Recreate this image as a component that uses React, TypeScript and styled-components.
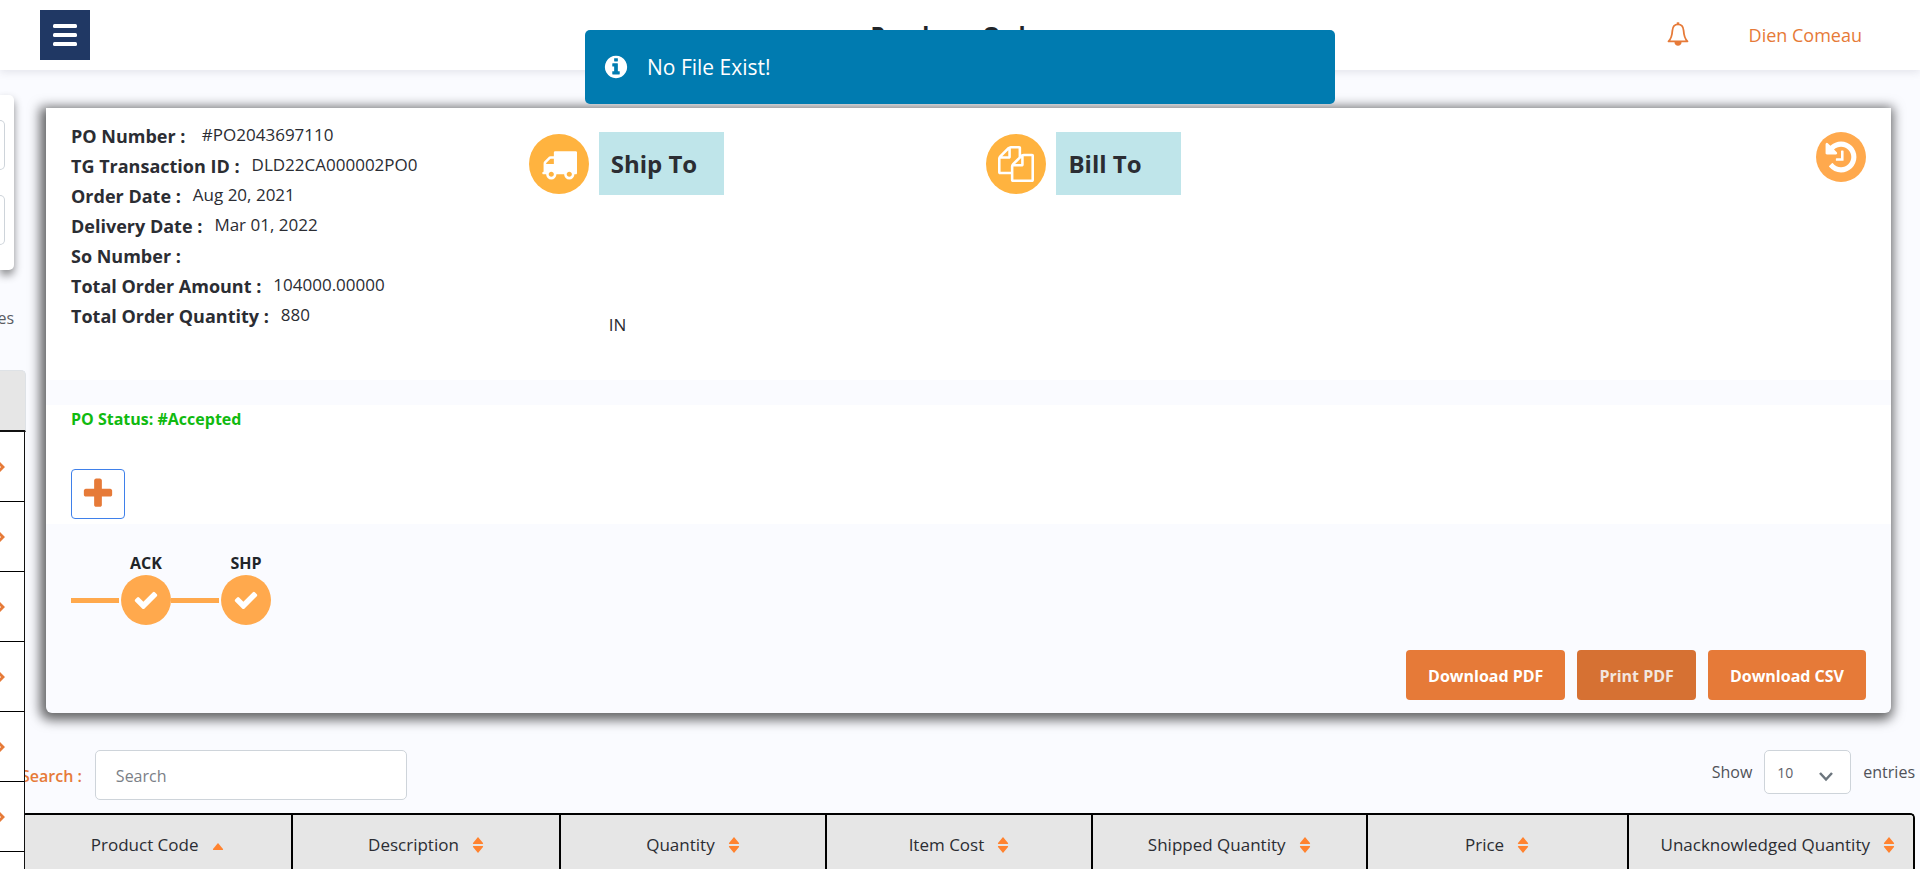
import React from "react";
import styled, { createGlobalStyle } from "styled-components";

const Global = createGlobalStyle`
  *, *::before, *::after { box-sizing: border-box; }
  html, body { margin: 0; }
  body {
    background: #fafbff;
    color: #2b2d33;
    font-family: "Segoe UI", "Open Sans", "Noto Sans", sans-serif;
    font-size: 16px;
    line-height: 24px;
  }
  button, input, select { font: inherit; color: inherit; }
`;

const Shell = styled.div`
  height: 100vh;
  overflow: hidden;
  display: flex;
  flex-direction: column;
`;

const TopBar = styled.header`
  position: relative;
  z-index: 3;
  flex: none;
  height: 70px;
  padding: 0 40px;
  display: grid;
  grid-template-columns: 1fr auto 1fr;
  align-items: center;
  background: #fff;
  box-shadow: 0 2px 8px rgba(60, 60, 80, 0.12);
`;

const MenuButton = styled.button`
  width: 50px;
  height: 50px;
  padding: 0;
  border: 0;
  background: #203864;
  color: #fff;
  display: flex;
  align-items: center;
  justify-content: center;
`;

const PageTitle = styled.h1`
  margin: 0;
  font-size: 23px;
  line-height: 30px;
  font-weight: 700;
  color: #212529;
`;

const UserArea = styled.div`
  display: flex;
  align-items: center;
  justify-content: flex-end;
  gap: 60px;
  padding-right: 18px;
`;

const BellButton = styled.button`
  display: flex;
  padding: 0 0 2px;
  border: 0;
  background: none;
  color: #e67a38;
`;

const UserLink = styled.a`
  color: #e67a38;
  font-size: 18px;
  text-decoration: none;
`;

const Toast = styled.div`
  position: fixed;
  z-index: 10;
  top: 30px;
  left: 50%;
  transform: translateX(-50%);
  width: 750px;
  height: 74px;
  padding: 0 18px;
  display: flex;
  align-items: center;
  gap: 18px;
  border-radius: 5px;
  background: #007bb0;
  color: #fff;
  font-size: 21px;
`;

const Body = styled.div`
  flex: 1;
  display: flex;
  min-height: 0;
`;

const Backdrop = styled.aside`
  position: relative;
  z-index: 2;
  flex: none;
  width: 26px;
  padding-top: 25px;
`;

const FilterCard = styled.div`
  width: 14px;
  padding: 25px 9px 25px 0;
  display: flex;
  flex-direction: column;
  gap: 25px;
  background: #fff;
  border-radius: 0 5px 5px 0;
  box-shadow: 0 5px 8px rgba(0, 0, 0, 0.45);
`;

const FilterField = styled.div`
  height: 50px;
  background: #fff;
  border: 1px solid #ced4da;
  border-left: 0;
  border-radius: 0 5px 5px 0;
`;

const Clipped = styled.div`
  width: 14px;
  margin: 36px 0 40px;
  display: flex;
  justify-content: flex-end;
  color: #5a5c63;
`;

const RowHead = styled.div`
  height: 62px;
  background: #e6e6e6;
  border: 1px solid #dee2e6;
  border-left: 0;
  border-bottom: 2px solid #111;
  border-radius: 0 5px 0 0;
`;

const Row = styled.div`
  height: 70px;
  display: flex;
  align-items: center;
  background: #fff;
  color: #e67a38;
  border-right: 1px solid #111;
  border-bottom: 1px solid #000;
  width: 25px;
`;

const Main = styled.main`
  flex: 1;
  min-width: 0;
  padding: 38px 5px 0 0;
`;

const Card = styled.section`
  margin: 0 24px 0 20px;
  padding-bottom: 13px;
  border-radius: 0 0 6px 6px;
  background: #fafbff;
  box-shadow: -2px 3px 12px 4px rgba(0, 0, 0, 0.6);
`;

const Summary = styled.div`
  min-height: 272px;
  padding: 13px 25px;
  display: grid;
  grid-template-columns: 25.5% 25.5% 1fr auto;
  background: #fff;
`;

const Facts = styled.dl`
  margin: 0;
`;

const Fact = styled.div`
  display: flex;
  gap: 12px;
  height: 30px;
  line-height: 30px;
  dt { font-size: 18px; font-weight: 700; }
  dd { margin: 0; line-height: 28px; font-size: 17px; }
`;

const Party = styled.div`
  padding-top: 11px;
`;

const PartyHead = styled.div`
  display: flex;
  align-items: center;
  gap: 10px;
`;

const Disc = styled.span<{ $size: number; $color?: string }>`
  flex: none;
  width: ${(p) => p.$size}px;
  height: ${(p) => p.$size}px;
  border-radius: 50%;
  background: ${(p) => p.$color ?? "#ffa94d"};
  color: #fff;
  display: flex;
  align-items: center;
  justify-content: center;
`;

const PartyTitle = styled.h2`
  margin: 0;
  width: 125px;
  padding: 0 12px;
  background: #bfe5ea;
  font-size: 24px;
  line-height: 63px;
  font-weight: 700;
`;

const Address = styled.p`
  margin: 118px 0 0 80px;
  font-size: 17px;
`;

const HistoryButton = styled.button`
  margin-top: 11px;
  padding: 0;
  border: 0;
  background: none;
  align-self: start;
`;

const Status = styled.div`
  margin-top: 25px;
  padding: 2px 25px 5px;
  background: #fff;
`;

const StatusText = styled.p`
  margin: 0 0 38px;
  color: #10ba10;
  font-weight: 700;
`;

const AddButton = styled.button`
  width: 54px;
  height: 50px;
  padding: 0;
  border: 1px solid #3f80ea;
  border-radius: 4px;
  background: #fff;
  color: #e67a38;
  display: flex;
  align-items: center;
  justify-content: center;
`;

const Steps = styled.ol`
  list-style: none;
  margin: 0;
  padding: 27px 25px 0;
  display: flex;
`;

const Step = styled.li`
  width: 100px;
  display: grid;
  grid-template-columns: 48px 50px;
  column-gap: 2px;
  align-items: center;
  justify-items: center;
`;

const StepName = styled.span`
  grid-column: 2;
  font-weight: 700;
  color: #212529;
`;

const StepLine = styled.span`
  grid-column: 1;
  width: 100%;
  height: 5px;
  background: #ffa94d;
`;

const Actions = styled.div`
  margin-top: 25px;
  padding: 0 25px;
  display: flex;
  justify-content: flex-end;
  gap: 12px;
`;

const ActionButton = styled.button<{ $pressed?: boolean }>`
  height: 50px;
  padding: 2px 22px 0;
  border: 0;
  border-radius: 4px;
  background: ${(p) => (p.$pressed ? "#d67133" : "#e67a38")};
  color: ${(p) => (p.$pressed ? "#f3e6df" : "#fff")};
  font-weight: 700;
`;

const Tools = styled.div`
  margin: 37px 0 13px -5px;
  display: flex;
  justify-content: space-between;
  align-items: flex-start;
`;

const SearchGroup = styled.div`
  display: flex;
  align-items: center;
  gap: 13px;
  label { color: #e67a38; font-weight: 600; padding-top: 2px; }
`;

const SearchInput = styled.input`
  width: 312px;
  height: 50px;
  padding: 2px 20px 0;
  border: 1px solid #ced4da;
  border-radius: 5px;
  background: #fff;
  &::placeholder { color: #7b8087; opacity: 1; }
`;

const LengthLabel = styled.label`
  display: flex;
  align-items: center;
  gap: 12px;
  color: #505259;
`;

const SelectWrap = styled.span`
  position: relative;
  display: flex;
  svg {
    position: absolute;
    right: 17px;
    top: 18px;
    color: #6c757d;
    pointer-events: none;
  }
`;

const LengthSelect = styled.select`
  width: 87px;
  height: 44px;
  padding: 2px 12px 0;
  appearance: none;
  border: 1px solid #ced4da;
  border-radius: 5px;
  background: #fff;
  color: #5f6168;
  font-size: 14px;
`;

const Items = styled.table`
  width: calc(100% + 5px);
  margin-left: -5px;
  table-layout: fixed;
  border-collapse: separate;
  border-spacing: 0;
  border: 2px solid #000;
  border-bottom: 0;
  border-radius: 5px 5px 0 0;
  overflow: hidden;
`;

const HeadCell = styled.th`
  height: 60px;
  padding: 0;
  background: #e6e6e6;
  border-right: 2px solid #000;
  font-size: 17px;
  font-weight: 400;
  &:last-child { border-right: 0; padding-left: 14px; }
`;

const SortButton = styled.button`
  padding: 0;
  border: 0;
  background: none;
  display: inline-flex;
  align-items: center;
  gap: 13px;
  white-space: nowrap;
`;

const ICONS = {
  truck:
    "M640 1408q0-52-38-90t-90-38-90 38-38 90 38 90 90 38 90-38 38-90zm-384-512h384v-256h-158q-13 0-22 9l-195 195q-9 9-9 22v30zm1280 512q0-52-38-90t-90-38-90 38-38 90 38 90 90 38 90-38 38-90zm256-1088v1024q0 15-4 26.5t-13.5 18.5-16.5 11.5-23.5 6-22.5 2-25.5 0-22.5-.5q0 106-75 181t-181 75-181-75-75-181h-384q0 106-75 181t-181 75-181-75-75-181h-64q-3 0-22.5.5t-25.5 0-22.5-2-23.5-6-16.5-11.5-13.5-18.5-4-26.5q0-26 19-45t45-19v-320q0-8-.5-35t0-38 2.5-34.5 6.5-37 14-30.5 22.5-30l198-198q19-19 50.5-32t58.5-13h160v-192q0-26 19-45t45-19h1024q26 0 45 19t19 45z",
  files:
    "M1696 384q40 0 68 28t28 68v1216q0 40-28 68t-68 28h-960q-40 0-68-28t-28-68v-288h-544q-40 0-68-28t-28-68v-672q0-40 20-88t48-76l408-408q28-28 76-48t88-20h416q40 0 68 28t28 68v328q68-40 128-40h416zm-544 213l-299 299h299v-299zm-640-384l-299 299h299v-299zm196 647l316-316v-416h-384v416q0 40-28 68t-68 28h-416v640h512v-256q0-40 20-88t48-76zm956 804v-1152h-384v416q0 40-28 68t-68 28h-416v640h896z",
  history:
    "M1664 896q0 156-61 298t-164 245-245 164-298 61q-172 0-327-72.5t-264-204.5q-7-10-6.5-22.5t8.5-20.5l137-138q10-9 25-9 16 2 23 12 73 95 179 147t225 52q104 0 198.5-40.5t163.5-109.5 109.5-163.5 40.5-198.5-40.5-198.5-109.5-163.5-163.5-109.5-198.5-40.5q-98 0-188 35.5t-160 101.5l137 138q31 30 14 69-17 40-59 40h-448q-26 0-45-19t-19-45v-448q0-42 40-59 39-17 69 14l130 129q107-101 244.5-156.5t284.5-55.5q156 0 298 61t245 164 164 245 61 298zm-640-288v448q0 14-9 23t-23 9h-320q-14 0-23-9t-9-23v-64q0-14 9-23t23-9h224v-352q0-14 9-23t23-9h64q14 0 23 9t9 23z",
  check:
    "M1671 566q0 40-28 68l-724 724-136 136q-28 28-68 28t-68-28l-136-136-362-362q-28-28-28-68t28-68l136-136q28-28 68-28t68 28l294 295 656-657q28-28 68-28t68 28l136 136q28 28 28 68z",
  plus:
    "M1600 736v192q0 40-28 68t-68 28h-416v416q0 40-28 68t-68 28h-192q-40 0-68-28t-28-68v-416h-416q-40 0-68-28t-28-68v-192q0-40 28-68t68-28h416v-416q0-40 28-68t68-28h192q40 0 68 28t28 68v416h416q40 0 68 28t28 68z",
  info:
    "M1152 1376v-160q0-14-9-23t-23-9h-96v-512q0-14-9-23t-23-9h-320q-14 0-23 9t-9 23v160q0 14 9 23t23 9h96v320h-96q-14 0-23 9t-9 23v160q0 14 9 23t23 9h448q14 0 23-9t9-23zm-128-896v-160q0-14-9-23t-23-9h-192q-14 0-23 9t-9 23v160q0 14 9 23t23 9h192q14 0 23-9t9-23zm640 416q0 209-103 385.5t-279.5 279.5-385.5 103-385.5-103-279.5-279.5-103-385.5 103-385.5 279.5-279.5 385.5-103 385.5 103 279.5 279.5 103 385.5z",
};

const Icon = ({ name, size }: { name: keyof typeof ICONS; size: number }) => (
  <svg width={size} height={size} viewBox="0 0 1792 1792" fill="currentColor" aria-hidden="true">
    <path d={ICONS[name]} />
  </svg>
);

const SortIcon = ({ ascending }: { ascending?: boolean }) => (
  <svg width="12" height="16" viewBox="0 0 12 16" fill="#ff8330" aria-hidden="true">
    {ascending ? (
      <path d="M6 6l5 6q.5 1-.5 1h-9q-1 0-.5-1z" />
    ) : (
      <path d="M6 0l5 6q.5 1-.5 1h-9q-1 0-.5-1zM6 16l5-6q.5-1-.5-1h-9q-1 0-.5 1z" />
    )}
  </svg>
);

const facts: [string, string][] = [
  ["PO Number :", "\u00a0#PO2043697110"],
  ["TG Transaction ID :", "DLD22CA000002PO0"],
  ["Order Date :", "Aug 20, 2021"],
  ["Delivery Date :", "Mar 01, 2022"],
  ["So Number :", ""],
  ["Total Order Amount :", "104000.00000"],
  ["Total Order Quantity :", "880"],
];

const columns: { name: string; width: string }[] = [
  { name: "Product Code", width: "14.3%" },
  { name: "Description", width: "14.15%" },
  { name: "Quantity", width: "14.1%" },
  { name: "Item Cost", width: "14.05%" },
  { name: "Shipped Quantity", width: "14.55%" },
  { name: "Price", width: "13.8%" },
  { name: "Unacknowledged Quantity", width: "15.05%" },
];

export default function App() {
  return (
    <>
      <Global />
      <Shell>
        <TopBar>
          <MenuButton aria-label="Menu">
            <svg width="26" height="24" viewBox="0 0 26 24" fill="currentColor">
              <rect x="1" y="1" width="24" height="4" rx="1.5" />
              <rect x="1" y="10" width="24" height="4" rx="1.5" />
              <rect x="1" y="19" width="24" height="4" rx="1.5" />
            </svg>
          </MenuButton>
          <PageTitle>Purchase Order</PageTitle>
          <UserArea>
            <BellButton aria-label="Notifications">
              <svg width="22" height="24" viewBox="0 0 22 24" fill="none" stroke="currentColor" strokeWidth="1.8">
                <path d="M11 2.300C7.400 2.300 5.700 4.600 5.400 8.500C5.100 13.500 4.600 16.500 1.500 19.300H20.500C17.400 16.500 16.900 13.500 16.600 8.500C16.300 4.600 14.600 2.300 11 2.300Z" strokeLinejoin="round" />
                <path d="M11 0.300V2.500" strokeWidth="2.500" />
                <path d="M7.500 20H14.500C14.500 22.500 13 23.700 11 23.700S7.500 22.500 7.500 20Z" fill="currentColor" stroke="none" />
              </svg>
            </BellButton>
            <UserLink href="#profile">Dien Comeau</UserLink>
          </UserArea>
        </TopBar>

        <Toast role="status">
          <Icon name="info" size={26} />
          <span>No File Exist!</span>
        </Toast>

        <Body>
          <Backdrop>
            <FilterCard>
              <FilterField />
              <FilterField />
            </FilterCard>
            <Clipped>es</Clipped>
            <RowHead />
            {[0, 1, 2, 3, 4, 5, 6].map((row) => (
              <Row key={row}>
                <svg width="5" height="12" viewBox="0 0 5 12" fill="none" stroke="currentColor" strokeWidth="3">
                  <path d="M-2 1L3 6L-2 11" />
                </svg>
              </Row>
            ))}
          </Backdrop>

          <Main>
            <Card>
              <Summary>
                <Facts>
                  {facts.map(([label, value]) => (
                    <Fact key={label}>
                      <dt>{label}</dt>
                      <dd>{value}</dd>
                    </Fact>
                  ))}
                </Facts>
                <Party>
                  <PartyHead>
                    <Disc $size={60} $color="#ffb33f">
                      <Icon name="truck" size={36} />
                    </Disc>
                    <PartyTitle>Ship To</PartyTitle>
                  </PartyHead>
                  <Address>IN</Address>
                </Party>
                <Party>
                  <PartyHead>
                    <Disc $size={60} $color="#ffb33f">
                      <Icon name="files" size={36} />
                    </Disc>
                    <PartyTitle>Bill To</PartyTitle>
                  </PartyHead>
                </Party>
                <HistoryButton aria-label="History">
                  <Disc $size={50}>
                    <Icon name="history" size={36} />
                  </Disc>
                </HistoryButton>
              </Summary>

              <Status>
                <StatusText>PO Status: #Accepted</StatusText>
                <AddButton aria-label="Add">
                  <Icon name="plus" size={36} />
                </AddButton>
              </Status>

              <Steps>
                {["ACK", "SHP"].map((name) => (
                  <Step key={name}>
                    <StepName>{name}</StepName>
                    <StepLine />
                    <Disc $size={50}>
                      <Icon name="check" size={26} />
                    </Disc>
                  </Step>
                ))}
              </Steps>

              <Actions>
                <ActionButton>Download PDF</ActionButton>
                <ActionButton $pressed>Print PDF</ActionButton>
                <ActionButton>Download CSV</ActionButton>
              </Actions>
            </Card>

            <Tools>
              <SearchGroup>
                <label htmlFor="search">Search :</label>
                <SearchInput id="search" placeholder="Search" />
              </SearchGroup>
              <LengthLabel>
                Show
                <SelectWrap>
                  <LengthSelect defaultValue="10">
                    <option>10</option>
                    <option>25</option>
                    <option>50</option>
                  </LengthSelect>
                  <svg width="16" height="16" viewBox="0 0 16 16" fill="none" stroke="currentColor" strokeWidth="2.500">
                    <path d="M2 5L8 11.500L14 5" />
                  </svg>
                </SelectWrap>
                entries
              </LengthLabel>
            </Tools>

            <Items>
              <colgroup>
                {columns.map((c) => (
                  <col key={c.name} style={{ width: c.width }} />
                ))}
              </colgroup>
              <thead>
                <tr>
                  {columns.map((c, i) => (
                    <HeadCell key={c.name} scope="col">
                      <SortButton>
                        {c.name}
                        <SortIcon ascending={i === 0} />
                      </SortButton>
                    </HeadCell>
                  ))}
                </tr>
              </thead>
            </Items>
          </Main>
        </Body>
      </Shell>
    </>
  );
}
